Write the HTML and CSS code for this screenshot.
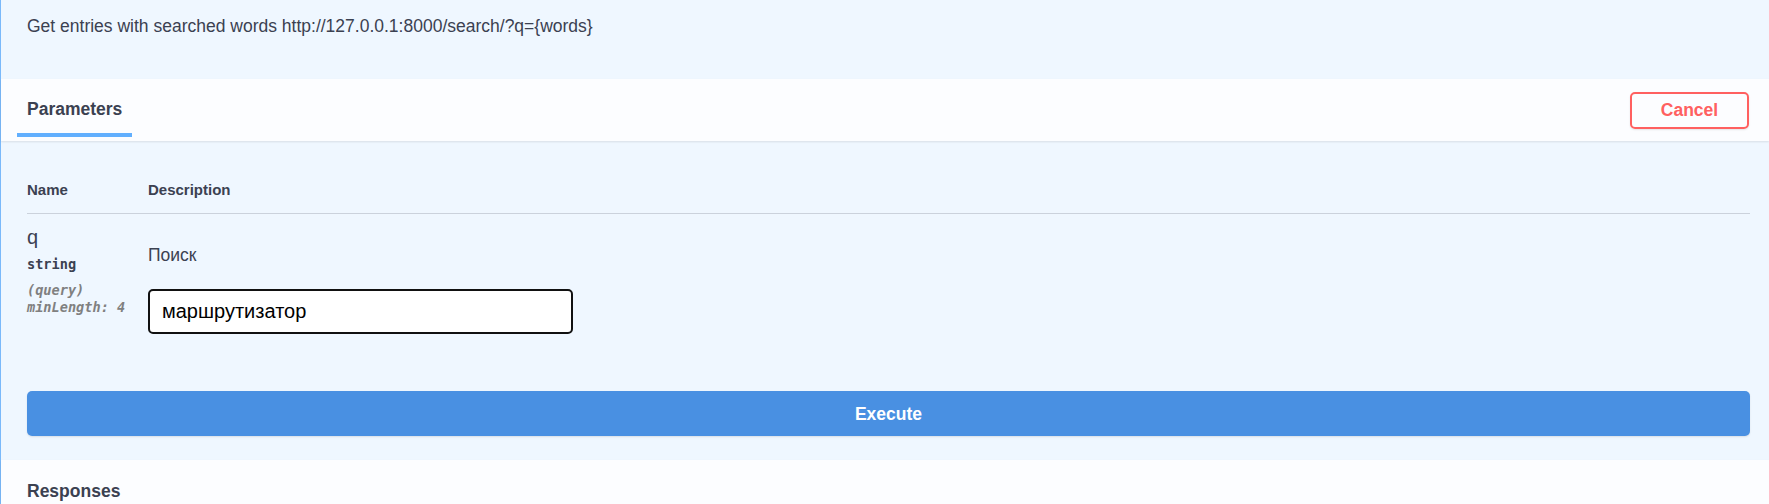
FILE: index.html
```html
<!DOCTYPE html>
<html lang="ru">
<head>
<meta charset="utf-8">
<title>Swagger operation</title>
<link rel="stylesheet" href="styles.css">
</head>
<body>
<div class="opblock">
  <div class="desc"><p>Get entries with searched words http://127.0.0.1:8000/search/?q={words}</p></div>
  <div class="section-header">
    <div class="tab"><h4>Parameters</h4></div>
    <button class="btn-cancel" type="button">Cancel</button>
  </div>
  <div class="params">
    <div class="thead">
      <div class="col-name">Name</div>
      <div class="col-desc">Description</div>
    </div>
    <div class="row">
      <div class="col-name">
        <div class="p-name">q</div>
        <div class="p-type">string</div>
        <div class="p-in first">(query)</div>
        <div class="p-in">minLength: 4</div>
      </div>
      <div class="col-desc">
        <div class="p-desc">Поиск</div>
        <input class="p-input" type="text" value="маршрутизатор">
      </div>
    </div>
    <div class="execute-wrap"><button class="btn-execute" type="button">Execute</button></div>
  </div>
  <div class="responses"><h4>Responses</h4></div>
</div>
</body>
</html>
```
FILE: styles.css
```css
* { box-sizing: border-box; }
html, body { margin: 0; padding: 0; }
body {
  background: #eff7ff;
  font-family: "Liberation Sans", Arial, sans-serif;
  color: #3b4151;
  width: 1769px;
  height: 504px;
  overflow: hidden;
}
.opblock {
  border-left: 1px solid #7ab9fa;
  background: #eff7ff;
  min-height: 504px;
}
.desc {
  height: 79px;
  padding: 16px 0 0 26px;
}
.desc p {
  margin: 0;
  font-size: 17.5px;
  line-height: 20px;
}
.section-header {
  position: relative;
  z-index: 1;
  height: 62px;
  display: flex;
  justify-content: space-between;
  align-items: center;
  padding: 0 20px 0 26px;
  background: #fcfdff;
  box-shadow: 0 1px 2px rgba(0, 0, 0, 0.1);
}
.tab {
  align-self: flex-start;
  padding-top: 20px;
}
.tab h4 {
  margin: 0;
  font-size: 17.5px;
  line-height: 20px;
  font-weight: 700;
}
.tab h4::after {
  content: "";
  display: block;
  height: 4px;
  width: 120%;
  margin-left: -10%;
  margin-top: 14px;
  background: #61affe;
}
.btn-cancel {
  width: 119px;
  height: 37px;
  padding: 0;
  border: 2px solid #ff6060;
  border-radius: 5px;
  background: transparent;
  color: #ff6060;
  font: 700 17.5px/20px "Liberation Sans", Arial, sans-serif;
  box-shadow: 0 1px 2px rgba(0, 0, 0, 0.1);
}
.params {
  padding: 40px 19px 24px 26px;
}
.thead {
  display: flex;
  font-size: 15px;
  font-weight: 700;
  line-height: 18px;
  padding-bottom: 14px;
  border-bottom: 1px solid #cbd2dc;
}
.col-name {
  width: 121px;
  flex: none;
}
.col-desc {
  flex: 1;
}
.row {
  display: flex;
  padding-top: 12px;
}
.p-name {
  font-size: 20px;
  line-height: 23px;
}
.p-type {
  font-family: "DejaVu Sans Mono", "Liberation Mono", monospace;
  font-size: 13.6px;
  font-weight: 700;
  line-height: 17px;
  margin-top: 7px;
}
.p-in {
  font-family: "DejaVu Sans Mono", "Liberation Mono", monospace;
  font-size: 13.6px;
  font-weight: 700;
  font-style: italic;
  color: #808080;
  line-height: 17px;
}
.p-in.first {
  margin-top: 9px;
}
.p-desc {
  font-size: 17.5px;
  line-height: 20px;
  margin-top: 19px;
}
.p-input {
  display: block;
  margin-top: 24px;
  width: 425px;
  height: 45px;
  padding: 0 12px;
  border: 2px solid #111;
  border-radius: 5px;
  background: #fff;
  color: #000;
  font: 20px "Liberation Sans", Arial, sans-serif;
  outline: none;
}
.execute-wrap {
  margin-top: 57px;
}
.btn-execute {
  display: block;
  width: 100%;
  height: 45px;
  padding: 0;
  border: none;
  border-radius: 5px;
  background: #4990e2;
  color: #fff;
  font: 700 17.5px/20px "Liberation Sans", Arial, sans-serif;
  box-shadow: 0 1px 2px rgba(0, 0, 0, 0.1);
}
.responses {
  position: relative;
  z-index: 1;
  background: #fcfdff;
  padding: 21px 26px 0;
  height: 60px;
  box-shadow: 0 1px 2px rgba(0, 0, 0, 0.1);
}
.responses h4 {
  margin: 0;
  font-size: 17.5px;
  line-height: 20px;
  font-weight: 700;
}
```
